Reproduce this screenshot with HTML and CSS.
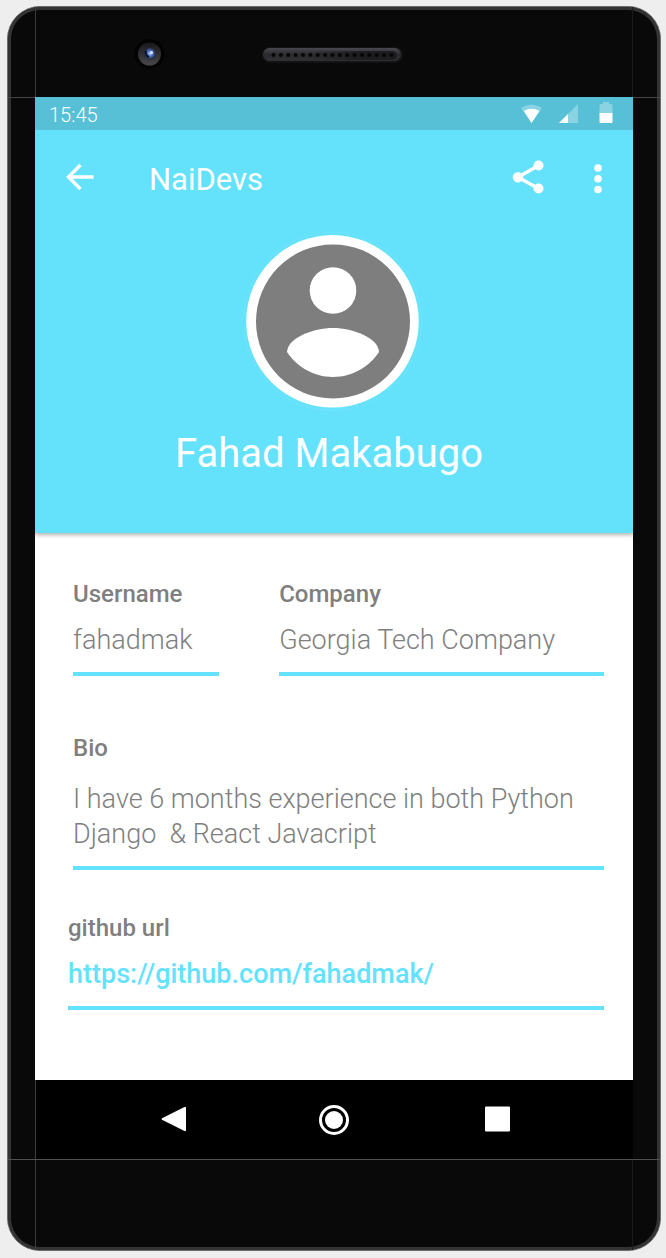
FILE: index.html
```html
<!DOCTYPE html>
<html lang="en">
<head>
<meta charset="utf-8">
<meta name="viewport" content="width=device-width, initial-scale=1">
<title>NaiDevs</title>
<link rel="stylesheet" href="styles.css">
</head>
<body>
<div class="phone">
  <div class="bezel bezel-top">
    <div class="bezel-inner">
      <svg class="camera" viewBox="0 0 32 32" aria-hidden="true">
        <defs>
          <linearGradient id="lens" x1="0" y1="0" x2="0" y2="1"><stop offset="0" stop-color="#18181a"/><stop offset="1" stop-color="#48484a"/></linearGradient>
          <radialGradient id="glass"><stop offset="0" stop-color="#b5caff"/><stop offset=".45" stop-color="#4f74c4"/><stop offset="1" stop-color="#1a2030"/></radialGradient>
        </defs>
        <circle cx="16.500" cy="16" r="15" fill="#030303"/>
        <circle cx="16.500" cy="16" r="11.500" fill="url(#lens)"/>
        <circle cx="17" cy="15.500" r="6" fill="url(#glass)"/>
        <path d="M13 13a5 5 0 0 0 3 6" fill="none" stroke="#0b1020" stroke-width="2"/>
        <circle cx="18.500" cy="14.500" r="1.500" fill="#dce8ff"/>
      </svg>
      <svg class="speaker" viewBox="0 0 144 20" aria-hidden="true">
        <defs>
          <linearGradient id="grille" x1="0" y1="0" x2="0" y2="1"><stop offset="0" stop-color="#48484e"/><stop offset=".5" stop-color="#2b2b2f"/><stop offset="1" stop-color="#303035"/></linearGradient>
          <linearGradient id="shade"><stop offset="0" stop-color="#151518" stop-opacity="0"/><stop offset=".6" stop-color="#151518" stop-opacity=".7"/></linearGradient>
        </defs>
        <rect x="0" y="3" width="141" height="16" rx="8" fill="#131316"/>
        <rect x="1" y="4" width="138" height="13" rx="6.500" fill="url(#grille)"/>
        <rect x="46" y="7" width="89" height="9" rx="4.500" fill="url(#shade)"/>
        <path d="M11.500 11H130" stroke="#060607" stroke-width="4" stroke-linecap="round" stroke-dasharray="0 7.370"/>
      </svg>
    </div>
  </div>
  <div class="middle">
    <div class="rail"></div>
    <div class="screen">
      <header class="hero">
        <div class="status">
          <time>15:45</time>
          <svg class="status-icons" viewBox="0 0 94 24" aria-hidden="true">
            <path d="M1 5Q11.500-2 22 5L11.500 20Z" fill="#fff" fill-opacity=".3"/>
            <path d="M4 8Q11.500 3.500 19.500 8L11.500 20Z" fill="#fff"/>
            <path d="M58 1V20H39Z" fill="#fff" fill-opacity=".3"/>
            <path d="M48 11V20H39Z" fill="#fff"/>
            <path d="M79.500 2.500Q79.500 1 81 1H83V-1H89V1H91Q92.500 1 92.500 2.500V10H79.500Z" fill="#fff" fill-opacity=".3"/>
            <path d="M79.500 10H92.500V19Q92.500 20 91.500 20H80.500Q79.500 20 79.500 19Z" fill="#fff"/>
          </svg>
        </div>
        <div class="toolbar">
          <button class="icon-button" type="button" aria-label="Back">
            <svg viewBox="0 0 40 40"><path d="M33.500 18H8.500M20.500 6L8.500 18L20.500 30" fill="none" stroke="#fff" stroke-width="3.400"/></svg>
          </button>
          <h1 class="title">NaiDevs</h1>
          <button class="icon-button" type="button" aria-label="Share">
            <svg viewBox="0 0 40 40"><path d="M30.500 6.500L10 18.300L30.500 29.500" fill="none" stroke="#fff" stroke-width="3.400"/><g fill="#fff"><circle cx="30.500" cy="6.500" r="5"/><circle cx="10" cy="18.300" r="5.200"/><circle cx="30.500" cy="29.500" r="5"/></g></svg>
          </button>
          <button class="icon-button" type="button" aria-label="More options">
            <svg viewBox="0 0 40 40" fill="#fff"><circle cx="20" cy="9" r="3.800"/><circle cx="20" cy="19.800" r="3.800"/><circle cx="20" cy="30.500" r="3.800"/></svg>
          </button>
        </div>
        <svg class="avatar" viewBox="0 0 180 180" role="img" aria-label="Profile picture">
          <circle cx="88.500" cy="90.300" r="89" fill="none" stroke="#70e4fb" stroke-width="1"/>
          <circle cx="88.500" cy="90.300" r="86.300" fill="#fff"/>
          <circle cx="89" cy="90.500" r="77" fill="#7e7e7e"/>
          <circle cx="89" cy="59.500" r="23.300" fill="#fff"/>
          <path d="M43 121C43.500 107 69 97 89 97C109 97 134.500 107 135 121C126 135 109 146 89 146C69 146 52 135 43 121Z" fill="#fff"/>
        </svg>
        <h2 class="name">Fahad Makabugo</h2>
      </header>
      <main class="details">
        <div class="pair">
          <div class="field">
            <label for="username">Username</label>
            <input id="username" type="text" value="fahadmak" readonly>
          </div>
          <div class="field">
            <label for="company">Company</label>
            <input id="company" type="text" value="Georgia Tech Company" readonly>
          </div>
        </div>
        <div class="field bio">
          <label for="bio">Bio</label>
          <textarea id="bio" rows="2" readonly>I have 6 months experience in both Python Django  &amp; React Javacript</textarea>
        </div>
        <div class="field github">
          <span class="caption" id="github-label">github url</span>
          <a href="https://github.com/fahadmak/" aria-describedby="github-label">https://github.com/fahadmak/</a>
        </div>
      </main>
      <nav class="navbar" aria-label="System">
        <button class="icon-button" type="button" aria-label="Go back">
          <svg viewBox="0 0 40 40"><path d="M9.500 18L31.500 7Q33 6.500 33 8V30Q33 31.500 31.500 31L9.500 20Q7.500 19 9.500 18Z" fill="#fff"/></svg>
        </button>
        <button class="icon-button" type="button" aria-label="Home">
          <svg viewBox="0 0 40 40"><circle cx="19" cy="20" r="13.500" fill="none" stroke="#fff" stroke-width="3"/><circle cx="19" cy="20" r="9" fill="#fff"/></svg>
        </button>
        <button class="icon-button" type="button" aria-label="Recent apps">
          <svg viewBox="0 0 40 40"><rect x="8" y="6.500" width="25" height="25" rx="1" fill="#fff"/></svg>
        </button>
      </nav>
    </div>
    <div class="rail"></div>
  </div>
  <div class="bezel bezel-bottom">
    <div class="bezel-inner"></div>
  </div>
</div>
</body>
</html>
```
FILE: styles.css
```css
* {
  box-sizing: border-box;
}

body {
  margin: 0;
  min-height: 100vh;
  padding: 6px 5px 7px 7px;
  display: flex;
  background: #eeeeee;
  color: #7f7f7f;
  font-family: Roboto, sans-serif;
}

svg {
  display: block;
}

.phone {
  flex: 1;
  min-width: 0;
  display: flex;
  flex-direction: column;
  border: 1px solid #6c6c6c;
  border-radius: 33px;
  background: #090909;
  box-shadow: inset 0 0 0 3px #333333;
}

.bezel {
  padding: 0 27px;
  display: flex;
}

.bezel-inner {
  flex: 1;
  border-left: 1px solid #3c3c3c;
  border-right: 1px solid #1c1c1c;
}

.bezel-top .bezel-inner {
  height: 90px;
  padding-top: 4px;
  display: grid;
  grid-template-columns: 1fr auto 1fr;
  align-items: center;
}

.bezel-bottom {
  border-top: 1px solid #505050;
}

.bezel-bottom .bezel-inner {
  height: 90px;
}

.camera {
  width: 32px;
  height: 32px;
  justify-self: center;
}

.speaker {
  width: 144px;
  height: 20px;
}

.middle {
  flex: 1;
  display: flex;
}

.rail {
  flex: 0 0 27px;
  border-top: 1px solid #444444;
}

.screen {
  flex: 1;
  min-width: 0;
  display: flex;
  flex-direction: column;
  background: #ffffff;
}

.hero {
  padding-bottom: 55px;
  display: flex;
  flex-direction: column;
  background: #64e2fc;
  color: #ffffff;
  box-shadow: 0 2px 4px rgba(0, 0, 0, 0.3);
  clip-path: inset(0 0 -8px 0);
}

.status {
  height: 33px;
  padding: 6px 19px 4px 14px;
  display: flex;
  align-items: center;
  justify-content: space-between;
  background: #57c0d7;
  font-size: 20px;
  font-weight: 300;
  line-height: 24px;
}

.status-icons {
  width: 94px;
  height: 24px;
  overflow: visible;
}

.toolbar {
  height: 98px;
  padding: 0 15px 0 25px;
  display: flex;
  align-items: center;
}

.title {
  flex: 1;
  margin: 0;
  padding: 2px 0 0 49px;
  font-size: 31px;
  font-weight: 400;
  line-height: 40px;
}

.toolbar .icon-button + .icon-button {
  margin-left: 30px;
}

.icon-button {
  width: 40px;
  height: 40px;
  padding: 0;
  border: 0;
  background: none;
}

.avatar {
  width: 180px;
  height: 180px;
  margin: 3px auto 19px;
}

.name {
  margin: 0;
  padding-right: 10px;
  font-size: 40px;
  font-weight: 400;
  line-height: 48px;
  text-align: center;
}

.details {
  flex: 1;
  padding: 45px 29px 70px 33px;
}

.pair {
  padding-left: 5px;
  display: grid;
  grid-template-columns: 9fr 20fr;
  gap: 60px;
}

.field {
  min-width: 0;
  display: flex;
  flex-direction: column;
  gap: 10px;
}

.bio {
  margin: 56px 0 42px 5px;
  gap: 18px;
}

.field label,
.caption {
  font-size: 24px;
  font-weight: 500;
  line-height: 32px;
}

.field input,
.field textarea,
.field a {
  display: block;
  width: 100%;
  margin: 0;
  padding: 0 0 12px;
  border: 0;
  border-bottom: 4px solid #64e2fc;
  border-radius: 0;
  background: none;
  color: inherit;
  font-family: inherit;
  font-size: 27px;
  font-weight: 300;
  line-height: 40px;
  outline: 0;
}

.field input {
  height: 56px;
}

.field textarea {
  height: 88px;
  padding-bottom: 14px;
  line-height: 35px;
  resize: none;
  overflow: hidden;
}

.field a {
  color: #64e2fc;
  font-weight: 500;
  text-decoration: none;
}

.navbar {
  height: 79px;
  display: flex;
  align-items: center;
  justify-content: center;
  gap: 122px;
  border-left: 1px solid #3c3c3c;
  background: #000000;
}
```
